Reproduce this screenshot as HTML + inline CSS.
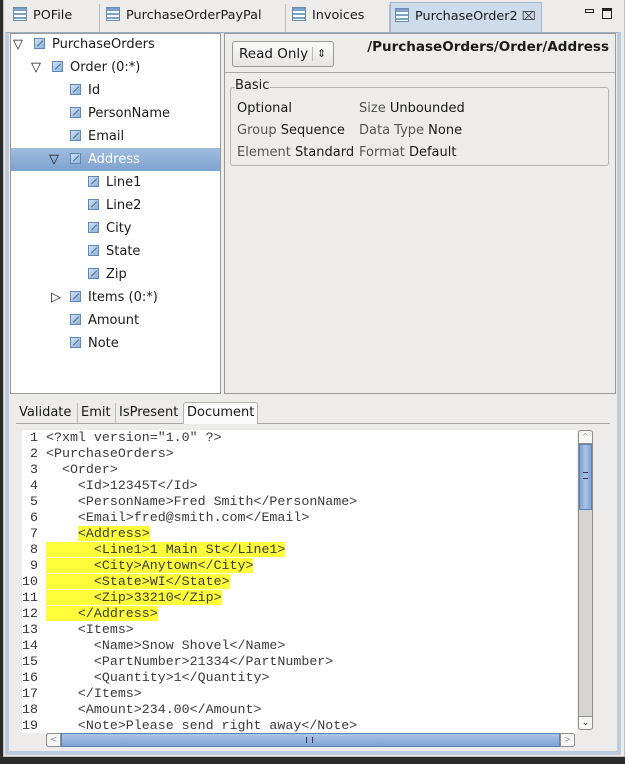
<!DOCTYPE html>
<html><head><meta charset="utf-8"><style>
*{margin:0;padding:0;box-sizing:border-box}
body{width:628px;height:764px;background:#edeceb;position:relative;overflow:hidden;font-family:"DejaVu Sans","Liberation Sans",sans-serif;font-size:13px;color:#1a1a1a}
.a{position:absolute}
.tab{position:absolute;top:4px;height:28px;border-right:1px solid #bdbcb9;line-height:24px;font-size:12.8px;white-space:nowrap}
.ic{display:inline-block;width:14px;height:14px;vertical-align:-2px;margin-right:6px;background:linear-gradient(#7da0c8 0 3px,#fff 3px 5px,#7da0c8 5px 7px,#fff 7px 9px,#7da0c8 9px 11px,#fff 11px);border:1px solid #6a8ab0}
.row{position:absolute;height:23px;line-height:22px;font-size:13px;white-space:nowrap}
.cb{display:inline-block;width:11px;height:11px;background:linear-gradient(135deg,#cfe0f2,#8fb3d9);border:1px solid #5f86b5;vertical-align:-1px;margin-right:7px;position:relative}
.cb:after{content:"";position:absolute;left:1px;top:4px;width:8px;height:1px;background:#3d6698;transform:rotate(-45deg)}
.tri{position:absolute;font-size:13px;line-height:14px}
.code{font-family:"Liberation Mono",monospace;font-size:13.3px;line-height:16px;white-space:pre;color:#3a3a3a}
.hl{background:#ffff3a}
.lbl{color:#555}
</style></head><body>
<div class="a" style="left:0;top:0;width:3px;height:764px;background:#2b2b2b"></div>
<div class="a" style="left:0;top:757px;width:628px;height:7px;background:#2b2b2b"></div>
<div class="a" style="left:625px;top:0;width:3px;height:764px;background:#fff"></div>
<div class="a" style="left:3px;top:0;width:622px;height:757px;border:1px solid #bfbebb;border-top:none"></div>
<div class="a" style="left:5px;top:32px;width:616px;height:723px;border:4px solid #bccbdd;border-top:1px solid #9aaec8"></div>
<!-- tabs -->
<div class="tab" style="left:7px;width:93px;padding-left:6px"><span class="ic"></span>POFile</div>
<div class="tab" style="left:100px;width:186px;padding-left:6px"><span class="ic"></span>PurchaseOrderPayPal</div>
<div class="tab" style="left:286px;width:104px;padding-left:6px"><span class="ic"></span>Invoices</div>
<div class="tab" style="left:390px;width:152px;padding-left:4px;background:#cddbeb;border:1px solid #a5b8d0;border-bottom:none;top:2px;height:30px;line-height:26px"><span class="ic"></span>PurchaseOrder2 <span style="font-size:12px;color:#444">&#8999;</span></div>
<div class="a" style="left:585px;top:9px;width:9px;height:4px;border:1px solid #222"></div>
<div class="a" style="left:602px;top:8px;width:10px;height:11px;border:1px solid #222;border-top-width:3px"></div>
<!-- tree panel -->
<div class="a" style="left:10px;top:33px;width:211px;height:361px;background:#fff;border:1px solid #9c9a96"></div>
<div class="a" style="left:11px;top:148px;width:209px;height:23px;background:linear-gradient(#a0bde0,#7ea2cf)"></div>
<div class="tri" style="left:13px;top:38px">&#9661;</div>
<div class="row" style="left:34px;top:34px"><span class="cb"></span>PurchaseOrders</div>
<div class="tri" style="left:31px;top:61px">&#9661;</div>
<div class="row" style="left:52px;top:57px"><span class="cb"></span>Order (0:*)</div>
<div class="row" style="left:70px;top:80px"><span class="cb"></span>Id</div>
<div class="row" style="left:70px;top:103px"><span class="cb"></span>PersonName</div>
<div class="row" style="left:70px;top:126px"><span class="cb"></span>Email</div>
<div class="tri" style="left:49px;top:153px">&#9661;</div>
<div class="row" style="left:70px;top:149px;color:#fff"><span class="cb"></span>Address</div>
<div class="row" style="left:88px;top:172px"><span class="cb"></span>Line1</div>
<div class="row" style="left:88px;top:195px"><span class="cb"></span>Line2</div>
<div class="row" style="left:88px;top:218px"><span class="cb"></span>City</div>
<div class="row" style="left:88px;top:241px"><span class="cb"></span>State</div>
<div class="row" style="left:88px;top:264px"><span class="cb"></span>Zip</div>
<div class="tri" style="left:51px;top:291px">&#9655;</div>
<div class="row" style="left:70px;top:287px"><span class="cb"></span>Items (0:*)</div>
<div class="row" style="left:70px;top:310px"><span class="cb"></span>Amount</div>
<div class="row" style="left:70px;top:333px"><span class="cb"></span>Note</div>
<!-- right panel -->
<div class="a" style="left:224px;top:33px;width:392px;height:361px;border:1px solid #9c9a96;background:#edeceb"></div>
<div class="a" style="left:225px;top:34px;width:390px;height:39px;border-bottom:1px solid #a8a7a4"></div>
<div class="a" style="left:232px;top:41px;width:102px;height:26px;border:1px solid #9a9995;border-radius:3px;background:linear-gradient(#fafafa,#e6e5e3);font-size:13.5px;line-height:24px;padding-left:6px">Read Only <span style="position:absolute;left:79px;top:5px;width:1px;height:14px;background:#bbb"></span><span style="position:absolute;left:84px;top:0;font-size:11px">&#8661;</span></div>
<div class="a" style="right:19px;top:39px;font-weight:bold;font-size:13.5px">/PurchaseOrders/Order/Address</div>
<div class="a" style="left:230px;top:87px;width:379px;height:79px;border:1px solid #b5b4b1;border-radius:3px"></div>
<div class="a" style="left:235px;top:78px;background:#edeceb;font-size:13px;padding-right:1px">Basic</div>
<div class="a" style="left:237px;top:98px;font-size:13px;line-height:22px">Optional<br><span class="lbl">Group</span> Sequence<br><span class="lbl">Element</span> Standard</div>
<div class="a" style="left:359px;top:98px;font-size:13px;line-height:22px"><span class="lbl">Size</span> Unbounded<br><span class="lbl">Data Type</span> None<br><span class="lbl">Format</span> Default</div>
<!-- bottom tabs -->
<div class="a" style="left:16px;top:423px;width:594px;height:1px;background:#a8a7a4"></div>
<div class="a" style="left:19px;top:403px;font-size:13px;line-height:20px;white-space:nowrap">Validate</div>
<div class="a" style="left:77px;top:403px;width:1px;height:20px;background:#bbb"></div>
<div class="a" style="left:81px;top:403px;font-size:13px;line-height:20px">Emit</div>
<div class="a" style="left:115px;top:403px;width:1px;height:20px;background:#bbb"></div>
<div class="a" style="left:119px;top:403px;font-size:13px;line-height:20px">IsPresent</div>
<div class="a" style="left:183px;top:402px;width:75px;height:22px;background:#fafafa;border:1px solid #b3b2af;border-bottom:none;border-radius:3px 3px 0 0;font-size:13px;line-height:20px;padding-left:3px">Document</div>
<!-- code -->
<div class="a" style="left:22px;top:430px;width:555px;height:303px;background:#fff;overflow:hidden">
<div class="a code" style="left:0;top:0;width:16px;text-align:right;color:#333">1
2
3
4
5
6
7
8
9
10
11
12
13
14
15
16
17
18
19</div>
<div class="a code" style="left:24px;top:0">&lt;?xml version="1.0" ?&gt;
&lt;PurchaseOrders&gt;
  &lt;Order&gt;
    &lt;Id&gt;12345T&lt;/Id&gt;
    &lt;PersonName&gt;Fred Smith&lt;/PersonName&gt;
    &lt;Email&gt;fred@smith.com&lt;/Email&gt;
    <span class="hl">&lt;Address&gt;</span>
<span class="hl">      &lt;Line1&gt;1 Main St&lt;/Line1&gt;</span>
<span class="hl">      &lt;City&gt;Anytown&lt;/City&gt;</span>
<span class="hl">      &lt;State&gt;WI&lt;/State&gt;</span>
<span class="hl">      &lt;Zip&gt;33210&lt;/Zip&gt;</span>
<span class="hl">    &lt;/Address&gt;</span>
    &lt;Items&gt;
      &lt;Name&gt;Snow Shovel&lt;/Name&gt;
      &lt;PartNumber&gt;21334&lt;/PartNumber&gt;
      &lt;Quantity&gt;1&lt;/Quantity&gt;
    &lt;/Items&gt;
    &lt;Amount&gt;234.00&lt;/Amount&gt;
    &lt;Note&gt;Please send right away&lt;/Note&gt;</div>
</div>
<!-- vertical scrollbar -->
<div class="a" style="left:578px;top:430px;width:15px;height:300px;background:#d6d5d3;border:1px solid #8f8e8b;border-radius:3px"></div>
<div class="a" style="left:578px;top:430px;width:15px;height:14px;background:#f6f6f5;border:1px solid #8f8e8b;border-radius:3px 3px 0 0;font-size:8px;text-align:center;color:#999;line-height:12px">^</div>
<div class="a" style="left:579px;top:444px;width:13px;height:66px;background:linear-gradient(90deg,#7fa3d3,#a9c4e6,#7fa3d3);border:1px solid #5e82b2"></div>
<div class="a" style="left:583px;top:472px;width:5px;height:7px;border-top:1px solid #335;border-bottom:1px solid #335"></div>
<div class="a" style="left:578px;top:716px;width:15px;height:14px;background:#f6f6f5;border:1px solid #8f8e8b;border-radius:0 0 3px 3px;font-size:9px;text-align:center;line-height:12px">&#8964;</div>
<!-- horizontal scrollbar -->
<div class="a" style="left:46px;top:733px;width:529px;height:14px;background:#d6d5d3;border:1px solid #8f8e8b;border-radius:3px"></div>
<div class="a" style="left:46px;top:733px;width:15px;height:14px;background:#f6f6f5;border:1px solid #8f8e8b;border-radius:3px 0 0 3px;font-size:9px;color:#999;text-align:center;line-height:12px">&lt;</div>
<div class="a" style="left:61px;top:733px;width:499px;height:14px;background:linear-gradient(#a9c4e6,#7fa3d3);border:1px solid #5e82b2"></div>
<div class="a" style="left:306px;top:737px;width:7px;height:6px;border-left:1px solid #335;border-right:1px solid #335"></div>
<div class="a" style="left:560px;top:733px;width:15px;height:14px;background:#f6f6f5;border:1px solid #8f8e8b;border-radius:0 3px 3px 0;font-size:9px;color:#999;text-align:center;line-height:12px">&gt;</div>
</body></html>
